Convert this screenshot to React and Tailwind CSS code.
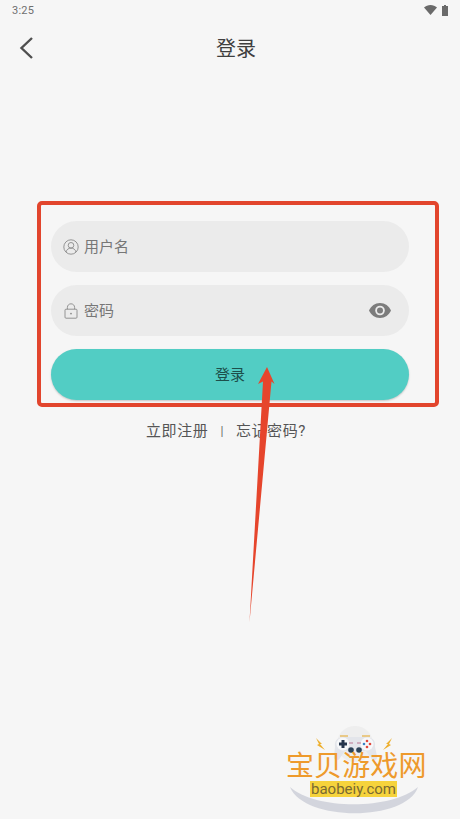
const cjk = 'font-["Roboto","Noto_Sans_CJK_SC",sans-serif]';

const StatusBar = () => (
    <div className="h-[20px] flex items-center justify-between pl-[12px] pr-[12px] text-[#6f6f6f]">
        <span className="text-[11px] leading-none tracking-[0.2px]">3:25</span>
        <div className="flex items-center gap-[5px]">
            <svg width="13" height="10" viewBox="0 0 13 10">
                <path d="M0 2.6C1.8 1 4 0 6.5 0S11.2 1 13 2.6L6.5 10z" fill="#6a6a6a" />
            </svg>
            <svg width="6" height="11" viewBox="0 0 6 11">
                <path d="M2 0h2v1h2v10H0V1h2z" fill="#6a6a6a" />
            </svg>
        </div>
    </div>
);

const BackIcon = () => (
    <svg className="absolute left-[18px] top-[16px]" width="16" height="24" viewBox="0 0 16 24" fill="none" stroke="#4f4f4f" strokeWidth="2.4">
        <path d="M14 2L3.500 12L14 22" />
    </svg>
);

const UserIcon = () => (
    <svg width="16" height="16" viewBox="0 0 16 16" fill="none" stroke="#8a8a8a" strokeWidth="0.9">
        <circle cx="8" cy="8" r="7.2" />
        <circle cx="8" cy="6.3" r="2.8" />
        <path d="M3 13c.7-2.6 2.6-3.9 5-3.9s4.3 1.3 5 3.9" />
    </svg>
);

const LockIcon = () => (
    <svg width="14" height="16" viewBox="0 0 14 16" fill="none" stroke="#8a8a8a" strokeWidth="0.9">
        <rect x="1" y="6.2" width="12" height="9" rx="1" />
        <path d="M3.4 6.2V4.4C3.4 2.3 5 .8 7 .8s3.6 1.5 3.6 3.6v1.8" />
        <circle cx="7" cy="10.6" r="0.9" fill="#8a8a8a" stroke="none" />
    </svg>
);

const EyeIcon = () => (
    <svg width="22" height="15" viewBox="0 0 22 15">
        <path d="M11 0C6 0 2 3 0 7.500 2 12 6 15 11 15s9-3 11-7.500C20 3 16 0 11 0z" fill="#7c7c7c" />
        <circle cx="11" cy="7.500" r="4.800" fill="#ebebeb" />
        <circle cx="11" cy="7.500" r="3" fill="#7c7c7c" />
    </svg>
);

const Field = ({ icon, label, right }) => (
    <div className="h-[51px] rounded-full bg-[#ebebeb] flex items-center pl-[12px] pr-[18px]">
        <div className="w-[16px] flex justify-center">{icon}</div>
        <span className="ml-[5px] pt-[2px] text-[15px] text-[#777777]">{label}</span>
        {right && <div className="ml-auto">{right}</div>}
    </div>
);

const Arrow = () => (
    <svg className="absolute left-[240px] top-[360px]" width="40" height="265" viewBox="0 0 40 265">
        <path d="M27 7L34.500 24L31.500 21.500L9.500 262L23 21.500L18 24z" fill="#e6452c" />
    </svg>
);

const Logo = () => (
    <div className="absolute left-[270px] top-[720px] w-[170px] h-[99px]">
        <svg className="absolute left-0 top-0" width="170" height="99" viewBox="0 0 170 99">
            <path d="M20 67C45 90 122 90 148 67C136 102 34 102 20 67z" fill="#d3d5dd" />
            <circle cx="85" cy="24" r="18" fill="#eeeeee" />
            <path d="M70 16h8M92 16h8" stroke="#e9c987" strokeWidth="2" />
            <path d="M65 27C64 19 69 17 76 17h18c7 0 12 2 11 10l2 9c1 4-4 6-6 2l-5-7H75l-5 7c-2 4-7 2-6-2z" fill="#e3e5ea" />
            <circle cx="73" cy="24" r="6.500" fill="#f7f8fa" />
            <path d="M71.500 20h3v2.500H77v3h-2.500V28h-3v-2.500H69v-3h2.500z" fill="#26364d" />
            <circle cx="97" cy="24" r="6.500" fill="#f7f8fa" />
            <circle cx="81" cy="30" r="2.800" fill="#2c4257" />
            <circle cx="89" cy="30" r="2.800" fill="#2c4257" />
            <path d="M79 23h4M87 23h4" stroke="#c99ab0" strokeWidth="1.500" />
            <circle cx="97" cy="21" r="1.300" fill="#e0483e" />
            <circle cx="100" cy="24" r="1.300" fill="#e0483e" />
            <circle cx="97" cy="27" r="1.300" fill="#e0483e" />
            <circle cx="94" cy="24" r="1.300" fill="#3b82c4" />
            <path d="M46 18l6 6-2 0 5 6-8-5 2-1zM122 18l-6 6 2 0-5 6 8-5-2-1z" fill="#eeb02f" />
        </svg>
        <div className="absolute left-[16px] top-[34px] text-[28px] leading-[26px] tracking-[0.100px] whitespace-nowrap text-[#ee9a2c]">宝贝游戏网</div>
        <div className="absolute left-[40px] top-[61px] w-[87px] h-[16px] bg-[#f6d33c] text-[15px] leading-[16px] text-center text-[#7a6a32] font-['Roboto',sans-serif]">baobeiy.com</div>
    </div>
);

const App = () => {
    return (
        <div className={`relative w-[460px] h-[819px] overflow-hidden bg-[#f6f6f6] ${cjk}`}>
            <StatusBar />

            <div className="relative h-[58px] flex items-center justify-center pl-[12px]">
                <BackIcon />
                <h1 className="text-[20px] font-normal text-[#3f3f3f]">登录</h1>
            </div>

            <div className="mt-[123px] ml-[37px] mr-[21px] h-[206px] border-[4px] border-[#e2452d] rounded-[5px] pl-[10px] pr-[26px] pt-[16px] flex flex-col gap-[13px]">
                <Field icon={<UserIcon />} label="用户名" />
                <Field icon={<LockIcon />} label="密码" right={<EyeIcon />} />
                <button className="h-[51px] rounded-full bg-[#52cdc4] pt-[2px] text-[15px] text-[#1d4f4b] shadow-[0_1px_2px_rgba(0,0,0,0.2)]">登录</button>
            </div>

            <div className="mt-[13px] flex justify-center items-center pr-[8px] text-[15px] tracking-[0.6px] text-[#555555]">
                <span>立即注册</span>
                <span className="mx-[12px] text-[12px] text-[#666666]">|</span>
                <span>忘记密码?</span>
            </div>

            <Arrow />
            <Logo />
        </div>
    );
};

export default App;
